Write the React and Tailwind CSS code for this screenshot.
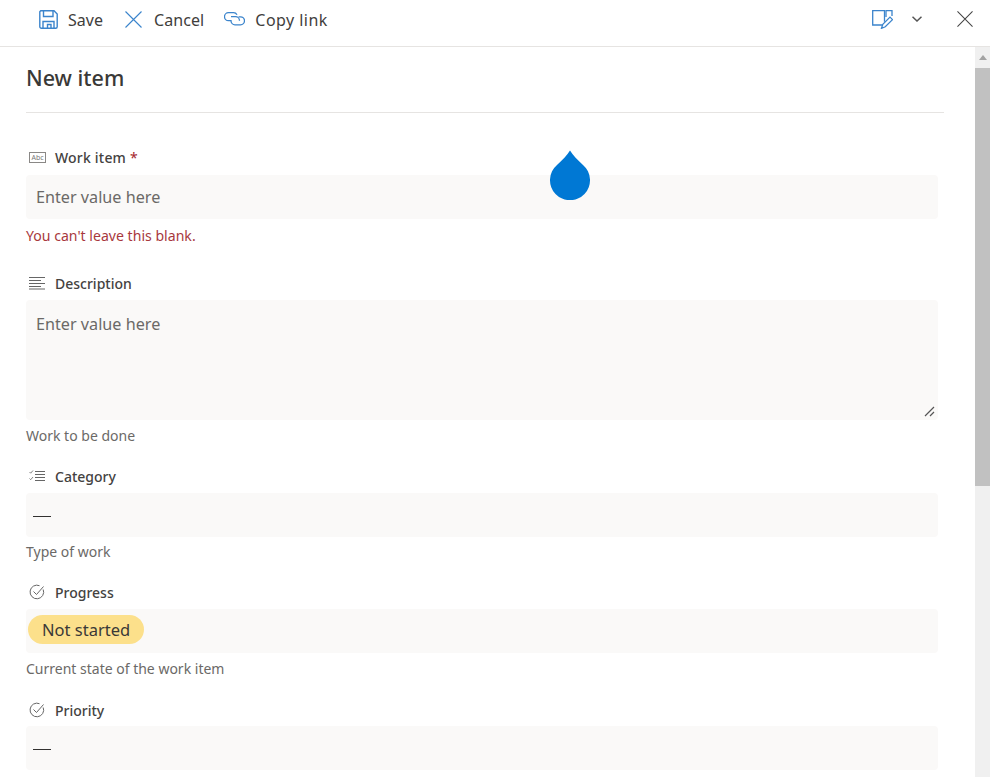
const font = "font-['Noto_Sans','Open_Sans',sans-serif]"

function SaveIcon() {
  return (
    <svg width="19" height="19" viewBox="0 0 19 19" fill="none" stroke="#3b84cc" strokeWidth="1.4">
      <path d="M1.700 0.800h13.300l3.200 3.200v12.700a1.500 1.500 0 0 1-1.500 1.500H2.300a1.500 1.500 0 0 1-1.500-1.500V1.700z" />
      <path d="M4.500 1v5.500h9.500V1M4 18v-6.500h11V18M8.500 18v-3.500h3.500V18" />
    </svg>
  )
}

function Cross({ size, color }) {
  return (
    <svg width={size} height={size} viewBox="0 0 17 17" fill="none" stroke={color} strokeWidth="1.1">
      <path d="M0.500 0.500l16 16M16.500 0.500l-16 16" />
    </svg>
  )
}

function LinkIcon() {
  return (
    <svg width="21" height="14" viewBox="0 0 21 14" fill="none" stroke="#3b84cc" strokeWidth="1.3">
      <path d="M8 0.700H4.500a4 4 0 0 0 0 8H7" />
      <path d="M7 4.700h4.500a4 4 0 0 1 4 4" />
      <path d="M14.500 4.800h2a4 4 0 0 1 0 8H11a4 4 0 0 1-4-4V8" />
      <path d="M8 0.700h1.500a4 4 0 0 1 3.500 2" />
    </svg>
  )
}

function EditFormIcon() {
  return (
    <svg width="21" height="19" viewBox="0 0 21 19" fill="none" stroke="#3b84cc" strokeWidth="1.3">
      <path d="M10.500 15H0.700V0.700h11.800v11" />
      <path d="M14 7V0.700h6V6" />
      <path d="M9.500 18.300l1.300-4 7.200-7.200 2.500 2.500-7.200 7.200z" />
    </svg>
  )
}

function Chevron() {
  return (
    <svg width="10" height="6" viewBox="0 0 10 6" fill="none" stroke="#555" strokeWidth="1.500">
      <path d="M0.500 0.700L5 5l4.500-4.300" />
    </svg>
  )
}

function AbcIcon() {
  return (
    <span className="flex h-[11px] w-[17px] items-center justify-center border border-[#8a8886] text-[7px] leading-none text-[#777]">Abc</span>
  )
}

function LinesIcon() {
  return (
    <svg width="17" height="14" viewBox="0 0 17 14" fill="none" stroke="#666" strokeWidth="1">
      <path d="M0 1.500h16M0 4.500h12M0 7.500h16M0 10.500h12M0 13h16" />
    </svg>
  )
}

function ChoiceIcon() {
  return (
    <svg width="17" height="14" viewBox="0 0 17 14" fill="none" stroke="#666" strokeWidth="1">
      <path d="M6 2.500h10M6 5.500h10M6 8.500h10M6 11.500h10" />
      <path d="M0.500 3l1.200 1.200L4 1.500M0.500 9.500l1.200 1.200L4 8" strokeWidth="0.8" />
    </svg>
  )
}

function CircleCheckIcon() {
  return (
    <svg width="16" height="16" viewBox="0 0 16 16" fill="none" stroke="#666" strokeWidth="1">
      <path d="M14.200 5.500A6.800 6.800 0 1 1 10.500 1.700" />
      <path d="M4.500 7.500l3 3L14.500 2.500" />
    </svg>
  )
}

function Droplet() {
  return (
    <svg width="40" height="50" viewBox="0 0 40 50" className="absolute left-[550px] top-[150px]">
      <path d="M20 0.500C17 5 13 9.500 7 15A20 20 0 1 0 33 15C27 9.500 23 5 20 0.500z" fill="#0078d4" />
    </svg>
  )
}

function Label({ icon, text, required, className }) {
  return (
    <div className={`flex h-6 items-center ${className}`}>
      <span className="flex w-[29px] items-center pl-[3px]">{icon}</span>
      <span className={`text-[14px] font-medium text-[#44423f] ${required ? 'tracking-[0.2px]' : ''}`}>{text}</span>
      {required && <span className="ml-1 text-[14px] text-[#a4262c]">*</span>}
    </div>
  )
}

function Box({ children }) {
  return (
    <div className="flex h-[44px] w-[912px] items-center rounded-sm bg-[#faf9f8]">{children}</div>
  )
}

function Dash() {
  return <span className="ml-[7px] mt-[2px] h-px w-[18px] bg-[#323130]" />
}

function Help({ children, className }) {
  return <p className={`text-[14px] leading-5 text-[#6b6967] ${className}`}>{children}</p>
}

function Action({ icon, text, className, textClass }) {
  return (
    <div className={`flex items-center ${className}`}>
      {icon}
      <span className={`pt-[1px] text-[16px] text-[#3f3e3c] ${textClass}`}>{text}</span>
    </div>
  )
}

export default function App() {
  return (
    <div className={`relative flex h-[777px] flex-col overflow-hidden bg-white ${font}`}>
      <header className="flex h-[47px] shrink-0 items-center border-b border-[#e6e4e2] pb-[8px] pl-[39px] pr-[17px]">
        <Action icon={<SaveIcon />} text="Save" className="gap-[10px]" />
        <Action icon={<Cross size={17} color="#3b84cc" />} text="Cancel" className="ml-[22px] gap-[12px]" textClass="tracking-[0.1px]" />
        <Action icon={<LinkIcon />} text="Copy link" className="ml-[20px] gap-[10px]" textClass="tracking-[0.45px]" />
        <div className="ml-auto flex items-center">
          <EditFormIcon />
          <span className="ml-[19px] flex"><Chevron /></span>
          <span className="ml-[35px] flex"><Cross size={16} color="#444" /></span>
        </div>
      </header>

      <div className="flex min-h-0 flex-1">
        <main className="min-w-0 flex-1 pl-[26px] pr-[31px]">
          <h1 className="flex h-[66px] items-center border-b border-[#e6e4e2] pb-[3px] text-[21.500px] font-medium text-[#3a3937]">New item</h1>

          <Label icon={<AbcIcon />} text="Work item" required className="mt-[32px] mb-[6px]" />
          <Box>
            <span className="pl-[10px] text-[16.200px] text-[#6b6967]">Enter value here</span>
          </Box>
          <p className="mt-[7px] text-[14.100px] leading-5 text-[#a8383d]">You can't leave this blank.</p>

          <Label icon={<LinesIcon />} text="Description" className="mt-[25px] mb-[5px]" />
          <div className="relative h-[120px] w-[912px] rounded-sm bg-[#faf9f8] px-[10px] pt-[12px]">
            <span className="block text-[16.200px] leading-6 text-[#6b6967]">Enter value here</span>
            <svg width="11" height="11" viewBox="0 0 11 11" className="absolute bottom-[3px] right-[3px]" stroke="#555" strokeWidth="1.200">
              <path d="M1 10L10 1M6 10l4-4" />
            </svg>
          </div>
          <Help className="mt-[6px]">Work to be done</Help>

          <Label icon={<ChoiceIcon />} text="Category" className="mt-[18px] mb-[5px]" />
          <Box><Dash /></Box>
          <Help className="mt-[5px]">Type of work</Help>

          <Label icon={<CircleCheckIcon />} text="Progress" className="mt-[18px] mb-[5px]" />
          <Box>
            <span className="ml-[2px] -mt-[3px] rounded-full bg-[#fce08b] px-[14px] py-[3px] text-[16.500px] leading-[23px] text-[#3a3937]">Not started</span>
          </Box>
          <Help className="mt-[6px]">Current state of the work item</Help>

          <Label icon={<CircleCheckIcon />} text="Priority" className="mt-[19px] mb-[4px]" />
          <Box><Dash /></Box>
        </main>

        <aside className="flex w-[15px] shrink-0 flex-col bg-[#f0f0f0]">
          <div className="flex h-[21px] items-center justify-center">
            <span className="border-x-[4px] border-b-[5px] border-x-transparent border-b-[#a3a3a3]" />
          </div>
          <div className="h-[418px] bg-[#c1c1c1]" />
        </aside>
      </div>

      <Droplet />
    </div>
  )
}
